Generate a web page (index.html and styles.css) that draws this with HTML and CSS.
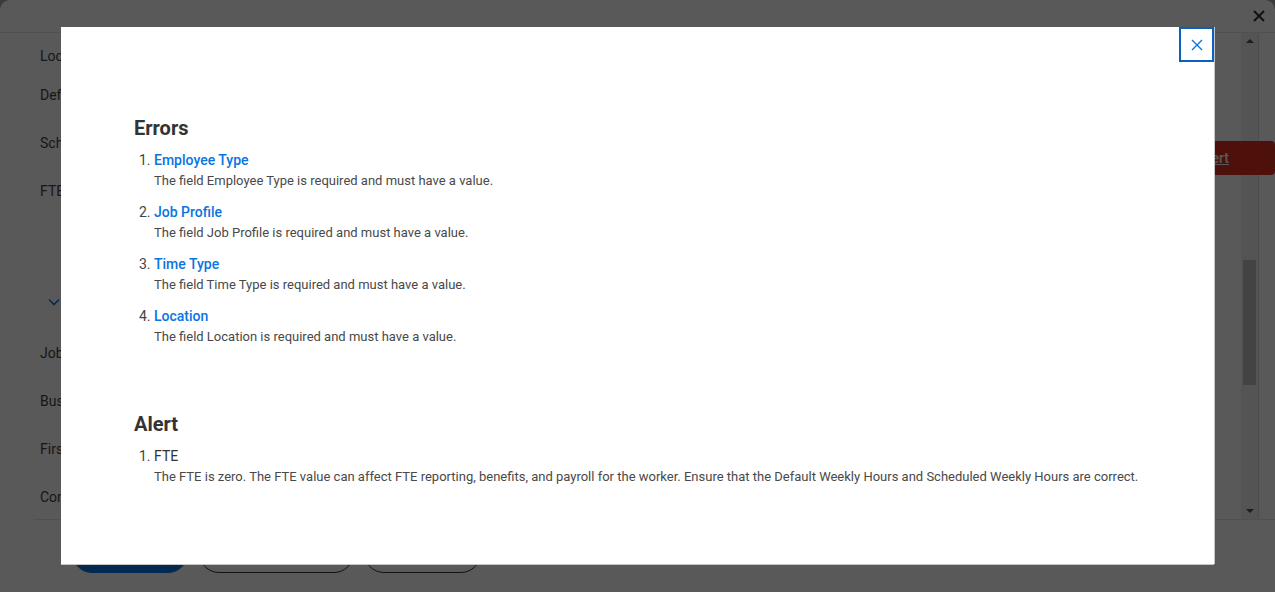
FILE: index.html
```html
<!DOCTYPE html>
<html lang="en">
<head>
<meta charset="utf-8">
<title>Errors and Alerts</title>
<link rel="stylesheet" href="styles.css">
</head>
<body>
<div class="app">
  <div class="topbar">
    <button class="page-close" aria-label="Close">
      <svg width="12" height="12" viewBox="0 0 12 12"><path d="M1 1L11 11M11 1L1 11" stroke="currentColor" stroke-width="1.8" fill="none"/></svg>
    </button>
  </div>
  <div class="main">
    <div class="form">
      <div class="field h39">Location</div>
      <div class="field h48">Default Weekly Hours</div>
      <div class="field h48">Schedule</div>
      <div class="field h111">FTE</div>
      <div class="field h51 chevron-row">
        <svg class="chevron" width="12" height="8" viewBox="0 0 12 8"><path d="M1 1.5L6 6.5L11 1.5" stroke="currentColor" stroke-width="1.6" fill="none"/></svg>
      </div>
      <div class="field h48">Job Details</div>
      <div class="field h48">Business Title</div>
      <div class="field h48">First Day of Work</div>
      <div class="field h48">Company</div>
    </div>
    <div class="scrollbar">
      <span class="arrow arrow-up"></span>
      <div class="track"><div class="thumb"></div></div>
      <span class="arrow arrow-down"></span>
    </div>
    <div class="gutter"></div>
  </div>
  <div class="footer">
    <button class="btn btn-primary">Submit</button>
    <button class="btn btn-outline btn-wide">Save for Later</button>
    <button class="btn btn-outline">Cancel</button>
  </div>
  <button class="alert-btn">4 Errors 1 Alert</button>
</div>
<div class="scrim"></div>
<div class="modal" role="dialog" aria-label="Errors and Alerts">
  <button class="modal-close" aria-label="Close">
    <svg width="12" height="12" viewBox="0 0 12 12"><path d="M1 1L11 11M11 1L1 11" stroke="currentColor" stroke-width="1.4" fill="none"/></svg>
  </button>
  <div class="modal-body">
    <section class="group">
      <h2 class="group-title">Errors</h2>
      <ol class="issues">
        <li class="issue">
          <a class="issue-link" href="#">Employee Type</a>
          <div class="issue-desc">The field Employee Type is required and must have a value.</div>
        </li>
        <li class="issue">
          <a class="issue-link" href="#">Job Profile</a>
          <div class="issue-desc">The field Job Profile is required and must have a value.</div>
        </li>
        <li class="issue">
          <a class="issue-link" href="#">Time Type</a>
          <div class="issue-desc">The field Time Type is required and must have a value.</div>
        </li>
        <li class="issue">
          <a class="issue-link" href="#">Location</a>
          <div class="issue-desc">The field Location is required and must have a value.</div>
        </li>
      </ol>
    </section>
    <section class="group">
      <h2 class="group-title">Alert</h2>
      <ol class="issues">
        <li class="issue">
          <span class="issue-label">FTE</span>
          <div class="issue-desc">The FTE is zero. The FTE value can affect FTE reporting, benefits, and payroll for the worker. Ensure that the Default Weekly Hours and Scheduled Weekly Hours are correct.</div>
        </li>
      </ol>
    </section>
  </div>
</div>
</body>
</html>
```

FILE: styles.css
```css
* { box-sizing: border-box; }

html, body {
  margin: 0;
  padding: 0;
  width: 1275px;
  height: 592px;
  overflow: hidden;
}

body {
  background: #a8a8a8;
  font-family: Roboto, "Liberation Sans", Arial, sans-serif;
  color: #333333;
  position: relative;
}

button {
  font-family: inherit;
  cursor: pointer;
}

/* ---------- background page ---------- */
.app {
  width: 1275px;
  height: 592px;
  background: #ffffff;
  border-radius: 10px 10px 0 0;
  display: flex;
  flex-direction: column;
  position: relative;
}

.topbar {
  height: 33px;
  flex: none;
  border-bottom: 1px solid #e6e6e6;
  display: flex;
  justify-content: flex-end;
  align-items: center;
  padding-right: 10px;
}

.page-close {
  border: 0;
  background: transparent;
  padding: 0;
  width: 12px;
  height: 12px;
  color: #2a2a2a;
  display: flex;
}

.main {
  height: 486px;
  flex: none;
  display: flex;
}

.form {
  flex: 1;
  padding: 13px 0 0 40px;
  display: flex;
  flex-direction: column;
}

.field {
  font-size: 14px;
  line-height: 20px;
  color: #444444;
  flex: none;
}

.h39 { height: 39px; }
.h48 { height: 48px; }
.h51 { height: 51px; }
.h111 { height: 111px; }

.chevron-row {
  padding-left: 8px;
  padding-top: 6px;
  display: flex;
  align-items: flex-start;
}

.chevron {
  color: #0875e1;
}

.scrollbar {
  width: 18px;
  flex: none;
  background: #f1f1f1;
  border-right: 1px solid #d9d9d9;
  display: flex;
  flex-direction: column;
  align-items: center;
}

.arrow {
  width: 0;
  height: 0;
  border-left: 4px solid transparent;
  border-right: 4px solid transparent;
  flex: none;
}

.arrow-up {
  border-bottom: 4px solid #505050;
  margin-top: 6px;
}

.arrow-down {
  border-top: 4px solid #505050;
  margin-bottom: 6px;
}

.track {
  flex: 1;
  width: 100%;
  padding: 217px 2px 0 2px;
}

.thumb {
  width: 13px;
  height: 125px;
  background: #c1c1c1;
}

.gutter {
  width: 16px;
  flex: none;
}

.footer {
  flex: 1;
  margin-left: 34px;
  border-top: 1px solid #e6e6e6;
  padding: 13px 0 0 38px;
  display: flex;
  align-items: flex-start;
}

.btn {
  height: 40px;
  border-radius: 20px;
  font-size: 14px;
  font-weight: 500;
  padding: 0 24px;
  flex: none;
}

.btn-primary {
  width: 116px;
  background: #0875e1;
  border: 1px solid #0875e1;
  color: #ffffff;
  margin-right: 11px;
}

.btn-outline {
  width: 117px;
  background: #ffffff;
  border: 1px solid #333333;
  color: #333333;
}

.btn-wide {
  width: 155px;
  margin-right: 10px;
}

.alert-btn {
  position: absolute;
  top: 141px;
  right: 0;
  height: 34px;
  width: 190px;
  border: 0;
  border-radius: 4px;
  background: #de2e21;
  color: #ffffff;
  font-size: 14px;
  font-weight: 500;
  text-decoration: underline;
  text-align: right;
  padding: 0 46px 0 0;
}

/* ---------- scrim ---------- */
.scrim {
  position: absolute;
  inset: 0;
  background: rgba(0, 0, 0, 0.65);
}

/* ---------- modal ---------- */
.modal {
  position: absolute;
  left: 61px;
  top: 27px;
  width: 1153px;
  height: 537px;
  background: #ffffff;
  box-shadow: 0 1px 0 #c6c6c6, 1px 0 0 #c6c6c6;
}

.modal-close {
  position: absolute;
  top: 0;
  right: 0;
  width: 35px;
  height: 35px;
  border: 2px solid #0b5fc0;
  background: #ffffff;
  color: #0875e1;
  padding: 0;
  display: flex;
  align-items: center;
  justify-content: center;
}

.modal-body {
  padding: 89px 0 0 73px;
  display: flex;
  flex-direction: column;
  gap: 54px;
}

.group-title {
  margin: 0;
  font-size: 20px;
  line-height: 24px;
  font-weight: 700;
  color: #333333;
}

.issues {
  margin: 10px 0 0;
  padding-left: 20px;
}

.issue {
  font-size: 14px;
  line-height: 20px;
  color: #333333;
  margin-bottom: 12px;
}

.issue::marker {
  color: #444444;
}

.issue-link {
  color: #0875e1;
  font-weight: 500;
  text-decoration: none;
}

.issue-label {
  color: #333333;
  font-weight: 400;
}

.issue-desc {
  margin-top: 2px;
  font-size: 13px;
  line-height: 18px;
  color: #494949;
}
```
